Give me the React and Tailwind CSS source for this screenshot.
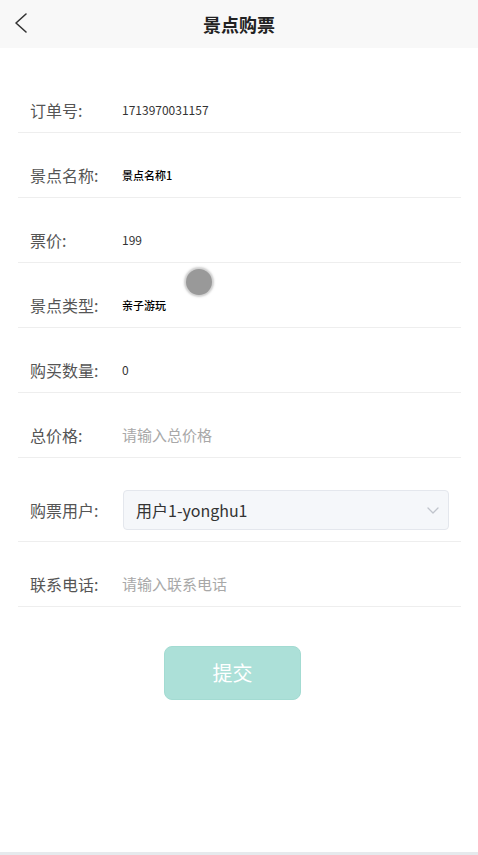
import React from "react";

const font = { fontFamily: '"Noto Sans CJK SC", "Noto Sans", sans-serif' };

function Row({ label, children }) {
  return (
    <div className="flex border-b border-[#eeeeee] pt-[30px] pb-[10px] pl-[12px]">
      <div className="flex h-[24px] w-[92px] shrink-0 items-center text-[16px] text-[#555555]">{label}</div>
      <div className="flex h-[24px] flex-1 items-center">{children}</div>
    </div>
  );
}

export default function App() {
  return (
    <div className="relative flex h-[855px] w-[478px] flex-col bg-white" style={font}>
      <div className="relative flex h-[48px] shrink-0 items-center justify-center bg-[#f8f8f8]">
        <svg className="absolute left-[13px] top-[12px]" width="16" height="22" viewBox="0 0 16 22" fill="none">
          <path d="M13 2 L3 11 L13 20" stroke="#333" strokeWidth="1.6" strokeLinecap="round" strokeLinejoin="round" />
        </svg>
        <span className="text-[18px] font-bold text-[#222]">景点购票</span>
      </div>

      <div className="mx-[18px] mr-[17px] flex-1 pt-[20px]">
        <Row label="订单号:">
          <span className="text-[12px] text-[#333]">1713970031157</span>
        </Row>
        <Row label="景点名称:">
          <span className="text-[11px] font-medium text-black">景点名称1</span>
        </Row>
        <Row label="票价:">
          <span className="text-[12px] text-[#333]">199</span>
        </Row>
        <Row label="景点类型:">
          <span className="text-[11px] font-medium text-black">亲子游玩</span>
        </Row>
        <Row label="购买数量:">
          <span className="text-[12px] text-[#333]">0</span>
        </Row>
        <Row label="总价格:">
          <span className="text-[15px] text-[#a8a8a8]">请输入总价格</span>
        </Row>
        <div className="flex border-b border-[#eeeeee] pt-[32px] pb-[11px] pl-[12px]">
          <div className="flex h-[40px] w-[93px] shrink-0 items-center text-[16px] text-[#555555]">购票用户:</div>
          <div className="mr-[12px] flex h-[40px] flex-1 items-center justify-between rounded-[4px] border border-[#e4e7ed] bg-[#f5f7fa] pl-[12px] pr-[8px]">
            <span className="text-[16px] text-[#333]">用户1-yonghu1</span>
            <svg width="14" height="10" viewBox="0 0 14 10" fill="none">
              <path d="M2 3 L7 8 L12 3" stroke="#c0c4cc" strokeWidth="1.3" strokeLinecap="round" strokeLinejoin="round" />
            </svg>
          </div>
        </div>
        <Row label="联系电话:">
          <span className="text-[15px] text-[#a8a8a8]">请输入联系电话</span>
        </Row>

        <div className="pt-[39px]">
          <button className="ml-[146px] flex h-[54px] w-[137px] items-center justify-center rounded-[8px] border border-[#a3dbd2] bg-[#ace0d8] text-[20px] text-white">
            提交
          </button>
        </div>
      </div>

      <div className="h-[3px] shrink-0 bg-[#e6eaed]" />

      <div className="absolute left-[186px] top-[269px] h-[26px] w-[26px] rounded-full bg-[#999999] shadow-[0_0_2px_2px_rgba(160,160,160,0.5)]" />
    </div>
  );
}
